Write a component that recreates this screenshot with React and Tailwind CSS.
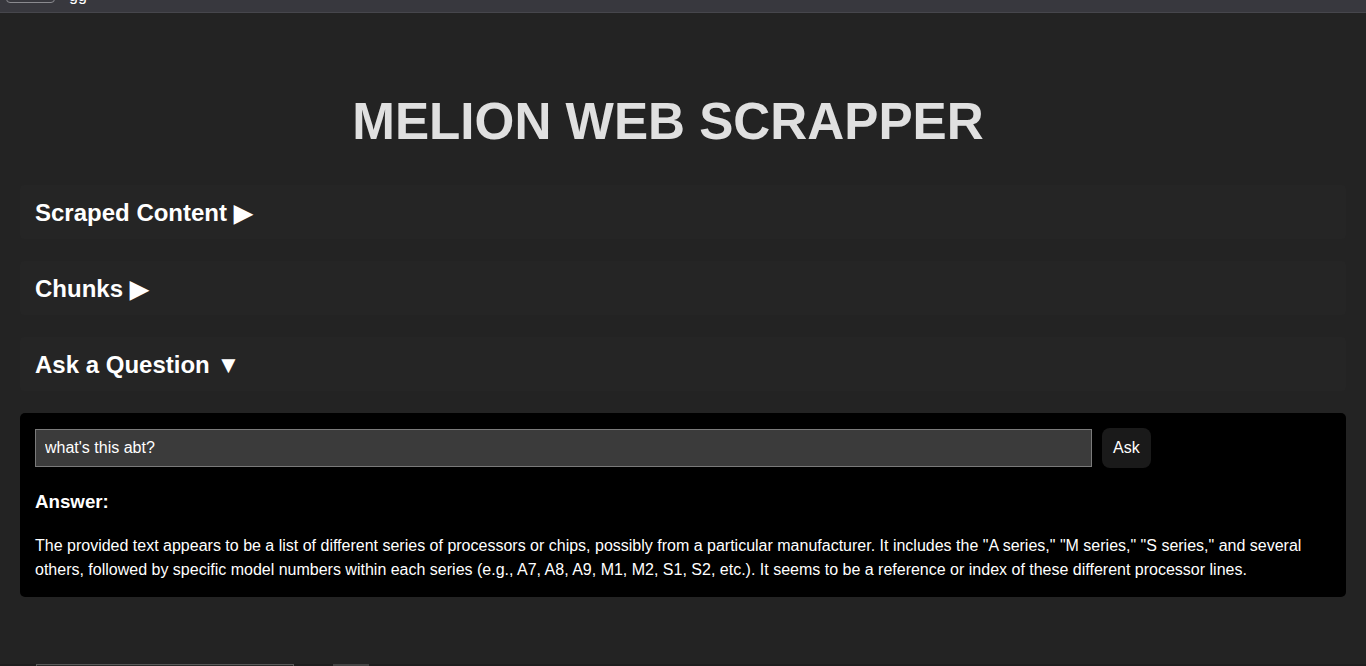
export default function App() {
  const font = { fontFamily: '"Liberation Sans", Arial, sans-serif' };
  return (
    <div className="min-h-[666px] bg-[#232323] text-white overflow-hidden" style={font}>
      <div className="h-[13px] bg-[#38383e] border-b border-[#46464c] flex items-end overflow-hidden">
        <div className="ml-[6px] w-[49px] h-[8px] mb-[9px] border border-[#8a8a8f] rounded-b-[4px] shrink-0" />
        <div className="ml-[14px] mb-[8px] text-[16px] leading-[16px] text-white shrink-0">gg</div>
      </div>
      <div className="px-5">
        <h1 className="mt-[79px] pr-[30px] text-center text-[51.2px] leading-[60px] font-bold text-[#e0e0e0]">
          MELION WEB SCRAPPER
        </h1>
        <div className="mt-[33px] flex flex-col gap-[22px]">
          <div className="bg-[#252525] rounded-[4px] px-[15px] pt-[16px] pb-[14px]">
            <h2 className="text-[24px] leading-[24px] font-bold">Scraped Content ▶</h2>
          </div>
          <div className="bg-[#252525] rounded-[4px] px-[15px] pt-[16px] pb-[14px]">
            <h2 className="text-[24px] leading-[24px] font-bold">Chunks ▶</h2>
          </div>
          <div className="bg-[#252525] rounded-[4px] px-[15px] pt-[16px] pb-[14px]">
            <h2 className="text-[24px] leading-[24px] font-bold">Ask a Question ▼</h2>
          </div>
          <div className="bg-black rounded-[5px] px-[15px] py-[15px]">
            <div className="flex items-center gap-[10px]">
              <input
                readOnly
                value="what's this abt?"
                className="w-[1057px] h-[38px] bg-[#3b3b3b] border border-[#7a7a7a] px-[9px] text-[16px] text-white outline-none"
                style={font}
              />
              <button className="h-[40px] px-[11px] bg-[#1a1a1a] rounded-[8px] text-[16px] text-white" style={font}>
                Ask
              </button>
            </div>
            <h3 className="mt-[23px] text-[18.72px] leading-[22px] font-bold">Answer:</h3>
            <p className="mt-[21px] text-[16px] leading-[24px] text-white">
              The provided text appears to be a list of different series of processors or chips, possibly from a particular manufacturer. It includes the "A series," "M series," "S series," and several others, followed by specific model numbers within each series (e.g., A7, A8, A9, M1, M2, S1, S2, etc.). It seems to be a reference or index of these different processor lines.
            </p>
          </div>
        </div>
      </div>
      <div className="mt-[67px] h-[20px] bg-[#1e1e1e] flex items-start">
        <div className="ml-[36px] w-[258px] h-[20px] border border-[#5a5a5a] bg-[#2a2a2a]" />
        <div className="ml-[39px] w-[36px] h-[20px] bg-[#444444]" />
      </div>
    </div>
  );
}
